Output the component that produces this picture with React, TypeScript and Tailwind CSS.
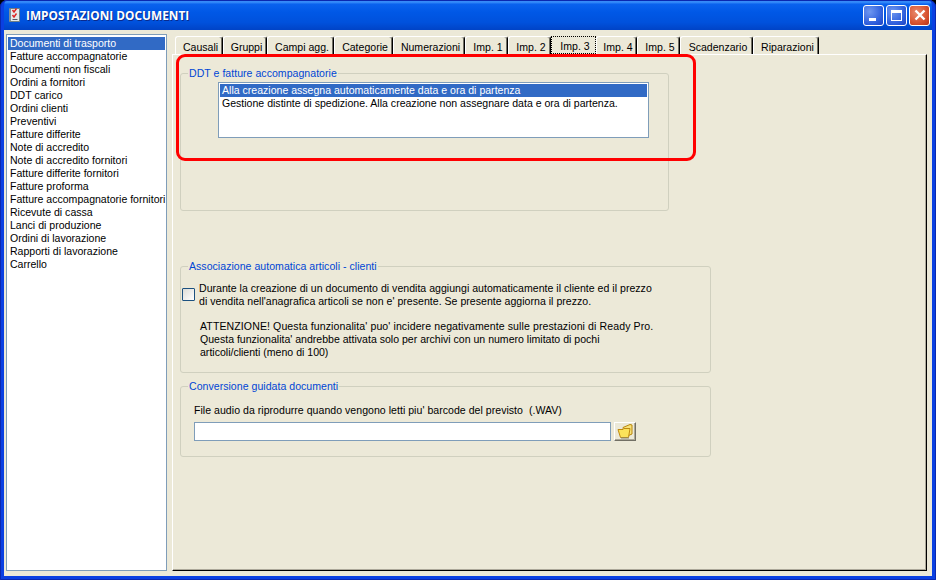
const tabs: [string, number][] = [
  ["Causali", 48],
  ["Gruppi", 44],
  ["Campi agg.", 67],
  ["Categorie", 59],
  ["Numerazioni", 72],
  ["Imp. 1", 43],
  ["Imp. 2", 43],
  ["Imp. 3", 45],
  ["Imp. 4", 41],
  ["Imp. 5", 43],
  ["Scadenzario", 73],
  ["Riparazioni", 66],
];

const docs = [
  "Documenti di trasporto",
  "Fatture accompagnatorie",
  "Documenti non fiscali",
  "Ordini a fornitori",
  "DDT carico",
  "Ordini clienti",
  "Preventivi",
  "Fatture differite",
  "Note di accredito",
  "Note di accredito fornitori",
  "Fatture differite fornitori",
  "Fatture proforma",
  "Fatture accompagnatorie fornitori",
  "Ricevute di cassa",
  "Lanci di produzione",
  "Ordini di lavorazione",
  "Rapporti di lavorazione",
  "Carrello",
];

function Group({ title, className, children }: { title: string; className: string; children: React.ReactNode }) {
  return (
    <div className={`relative border border-[#d0d0bf] rounded-[3px] ${className}`}>
      <span className="absolute -top-[7px] left-[7px] bg-[#ece9d8] px-[1px] text-[#0046d5] leading-[13px] whitespace-nowrap tracking-[0.03px]">{title}</span>
      {children}
    </div>
  );
}

function TitleIcon() {
  return (
    <svg width="13" height="16" viewBox="0 0 13 16" className="shrink-0">
      <path d="M1.5 1.5h10v13h-10z" fill="#e4e9ea" stroke="#6f7f86" />
      <path d="M1 2h2v12H1z" fill="#7f9098" />
      <path d="M4.5 3l1.5 2L8.5 1.5" fill="none" stroke="#d22" strokeWidth="1.4" />
      <path d="M4.5 8l1.5 2 2.5-3.5" fill="none" stroke="#d22" strokeWidth="1.4" />
      <path d="M4.5 12.5h5" stroke="#556" strokeWidth="1" />
    </svg>
  );
}

function CaptionButton({ kind }: { kind: "min" | "max" | "close" }) {
  const bg =
    kind === "close"
      ? "bg-[radial-gradient(circle_at_35%_35%,#e98a6e,#d8532f_60%,#b8331a)]"
      : "bg-[radial-gradient(circle_at_30%_30%,#6f97f0,#2f5fdc_65%,#1c43c4)]";
  return (
    <div className={`w-[21px] h-[21px] border border-white rounded-[3px] flex items-center justify-center ${bg}`}>
      {kind === "min" && <div className="w-[7px] h-[3px] bg-white mt-[9px] -ml-[2px]" />}
      {kind === "max" && <div className="w-[11px] h-[11px] border border-white border-t-[3px]" />}
      {kind === "close" && (
        <svg width="12" height="12" viewBox="0 0 12 12">
          <path d="M1.5 1.5l9 9M10.5 1.5l-9 9" stroke="#fff" strokeWidth="2.4" />
        </svg>
      )}
    </div>
  );
}

function FolderIcon() {
  return (
    <svg width="17" height="15" viewBox="0 0 17 15">
      <path d="M6 3.5l7-3 2 .5v9l-8 3.5z" fill="#f7e27a" stroke="#b8860b" />
      <path d="M1 5.5h5l1-1h6l-1.5 9H3.5z" fill="#fbe35b" stroke="#c08a10" />
      <path d="M4 14h8" stroke="#8a8a70" />
    </svg>
  );
}

export default function App() {
  return (
    <div className="w-[936px] h-[580px] overflow-hidden bg-black font-['Liberation_Sans',sans-serif] text-[10.55px] leading-[13px] text-black">
      <div className="w-full h-full flex flex-col rounded-t-[7px] overflow-hidden border-x-4 border-b-4 border-[#0a40e2] bg-[#0a40e2] outline-1 -outline-offset-1 outline-[#0a28b0]">
        <div className="h-[30px] -mx-[4px] shrink-0 flex items-center pl-[8px] pr-[6px] bg-[linear-gradient(180deg,#0a5ae8_0%,#3f94fb_6%,#0a62ee_14%,#0058e6_40%,#0051dc_75%,#0043c6_100%)]">
          <TitleIcon />
          <span className="ml-[5px] font-['Open_Sans',sans-serif] font-bold text-[11.85px] text-white [text-shadow:1px_1px_0_#0a2a8c] whitespace-nowrap">IMPOSTAZIONI DOCUMENTI</span>
          <div className="ml-auto flex gap-[2px]">
            <CaptionButton kind="min" />
            <CaptionButton kind="max" />
            <CaptionButton kind="close" />
          </div>
        </div>
        <div className="relative flex-1 min-h-0 flex bg-[#ece9d8] pt-[4px] pl-[2px] pr-[5px] pb-[5px]">
          <div className="w-[161px] shrink-0 bg-white border border-[#7f9db9] px-[1px] py-[2px] overflow-hidden">
            {docs.map((d, i) => (
              <div key={d} className={`h-[13px] pl-[2px] whitespace-nowrap ${i === 0 ? "bg-[#316ac5] text-white" : ""}`}>
                {d}
              </div>
            ))}
          </div>
          <div className="flex-1 min-w-0 ml-[5px] flex flex-col pt-[2px]">
            <div className="h-[18px] flex pl-[3px] shrink-0">
              {tabs.map(([t, w]) => (
                <div
                  key={t}
                  style={{ width: w }}
                  className={`h-[18px] shrink-0 flex items-center justify-center whitespace-nowrap pt-[3px] pl-[3px] ${
                    t === "Imp. 3"
                      ? "border border-dotted border-black"
                      : "border-l border-t border-white border-r border-r-black rounded-t-[3px] shadow-[inset_-1px_0_0_#716f64]"
                  }`}
                >
                  {t}
                </div>
              ))}
            </div>
            <div className="flex-1 min-h-0 border-l border-t border-white border-r border-r-black border-b border-b-black shadow-[inset_-1px_-1px_0_#aca899] pl-[7px] pt-[18px]">
              <Group title="DDT e fatture accompagnatorie" className="w-[489px] h-[138px] pl-[37px] pt-[8px]">
                <div className="w-[431px] h-[56px] bg-white border border-[#7f9db9] p-[1px]">
                  <div className="h-[13px] pl-[2px] bg-[#316ac5] text-white whitespace-nowrap">Alla creazione assegna automaticamente data e ora di partenza</div>
                  <div className="h-[13px] pl-[2px] whitespace-nowrap">Gestione distinte di spedizione. Alla creazione non assegnare data e ora di partenza.</div>
                </div>
              </Group>
              <Group title="Associazione automatica articoli - clienti" className="w-[531px] h-[107px] mt-[55px] pt-[15px]">
                <div className="flex">
                  <div className="w-[13px] h-[13px] mt-[6px] ml-[1px] border border-[#1c5180] rounded-[1px] bg-[linear-gradient(135deg,#dcdcd7,#fff)]" />
                  <div className="ml-[4px]">
                    <p className="whitespace-nowrap tracking-[0.02px]">
                      Durante la creazione di un documento di vendita aggiungi automaticamente il cliente ed il prezzo
                      <br />
                      di vendita nell'anagrafica articoli se non e' presente. Se presente aggiorna il prezzo.
                    </p>
                    <p className="mt-[12px] ml-[1px] whitespace-nowrap">
                      <span className="tracking-[0.1px]">ATTENZIONE! Questa funzionalita' puo' incidere negativamente sulle prestazioni di Ready Pro.</span>
                      <br />
                      Questa funzionalita' andrebbe attivata solo per archivi con un numero limitato di pochi
                      <br />
                      articoli/clienti (meno di 100)
                    </p>
                  </div>
                </div>
              </Group>
              <Group title="Conversione guidata documenti" className="w-[531px] h-[71px] mt-[13px] pl-[13px] pt-[17px]">
                <div className="whitespace-nowrap tracking-[0.03px]">File audio da riprodurre quando vengono letti piu' barcode del previsto&nbsp; (.WAV)</div>
                <div className="flex mt-[5px]">
                  <div className="w-[417px] h-[19px] bg-white border border-[#7f9db9]" />
                  <div className="w-[22px] h-[19px] ml-[3px] bg-[#ece9d8] border-t border-l border-white border-r border-b border-r-[#716f64] border-b-[#716f64] flex items-center justify-center shadow-[inset_-1px_-1px_0_#aca899]">
                    <FolderIcon />
                  </div>
                </div>
              </Group>
            </div>
          </div>
          <div className="absolute left-[172px] top-[24px] w-[520px] h-[107px] border-[3px] border-[#ff0000] rounded-[9px]" />
        </div>
      </div>
    </div>
  );
}
